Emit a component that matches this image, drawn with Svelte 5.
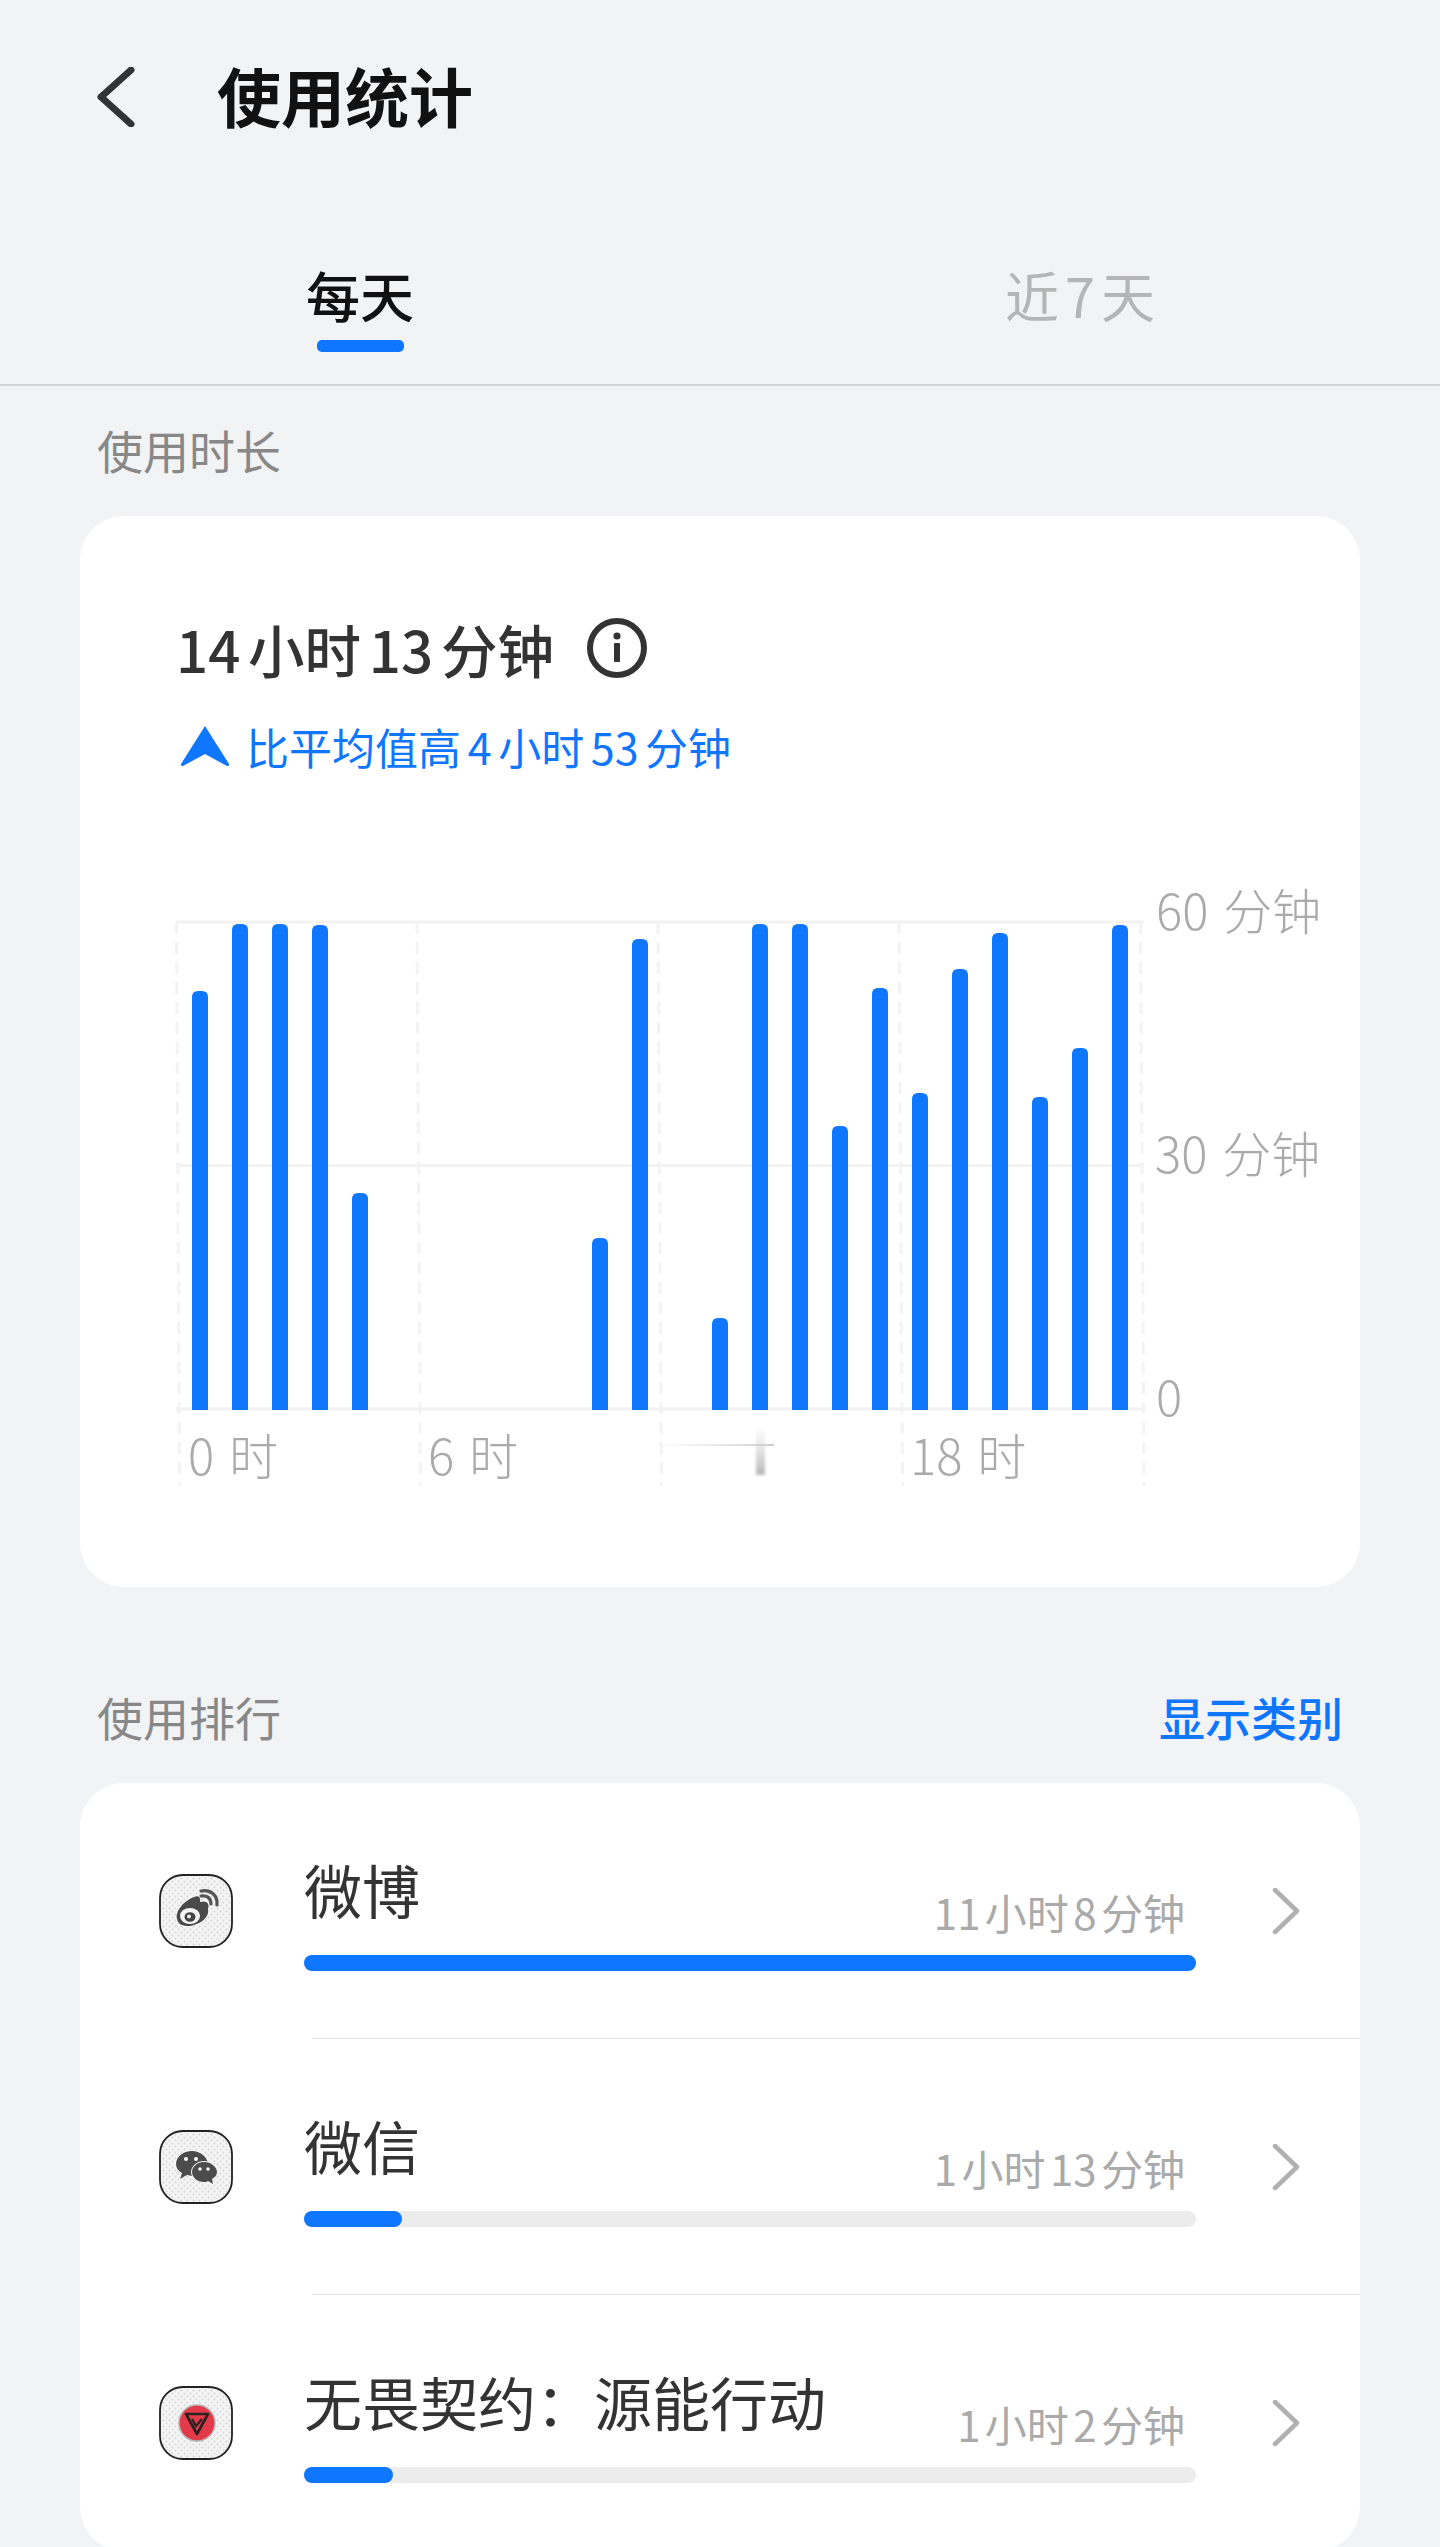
<script>
  // bar tops in page px, null = no usage that hour
  const tops = [991, 924, 924, 925, 1193, null, null, null, null, null, 1238, 939, null, 1318, 924, 924, 1126, 988, 1093, 969, 933, 1097, 1048, 925];
  const baseY = 1410;
  const barW = 16;

  const bars = tops
    .map((top, i) => ({ top, x: 192 + i * 40 }))
    .filter((b) => b.top !== null);

  function barPath(b) {
    const r = 6;
    return `M${b.x} ${baseY}V${b.top + r}Q${b.x} ${b.top} ${b.x + r} ${b.top}H${b.x + barW - r}Q${b.x + barW} ${b.top} ${b.x + barW} ${b.top + r}V${baseY}Z`;
  }

  const gridY = [922, 1165.5, 1409];
  const dashed = [
    [176.5, 179.5],
    [417, 420.5],
    [658, 661.5],
    [899, 902.5],
    [1140.5, 1144]
  ];

  const apps = [
    { name: '微博', time: '11 小时 8 分钟', pct: 100, icon: 'weibo' },
    { name: '微信', time: '1 小时 13 分钟', pct: 11, icon: 'wechat' },
    { name: '无畏契约：源能行动', time: '1 小时 2 分钟', pct: 10, icon: 'valorant' }
  ];
</script>

<div class="page">
  <header class="topbar">
    <svg class="back" width="40" height="60" viewBox="0 0 40 60">
      <path d="M35 3 L5 30 L35 57" fill="none" stroke="#333" stroke-width="7" stroke-linecap="round" stroke-linejoin="round" />
    </svg>
    <h1>使用统计</h1>
  </header>

  <nav class="tabs">
    <div class="tab active">每天<span class="indicator"></span></div>
    <div class="tab">近 7 天</div>
  </nav>

  <div class="section-label"><span>使用时长</span></div>

  <section class="card usage">
    <div class="summary">
      <div class="total">
        <span>14 小时 13 分钟</span>
        <svg width="60" height="60" viewBox="0 0 60 60">
          <circle cx="30" cy="30" r="27" fill="none" stroke="#333" stroke-width="6" />
          <circle cx="30" cy="18" r="3.6" fill="#333" />
          <rect x="27" y="25" width="6" height="19" rx="1" fill="#333" />
        </svg>
      </div>
      <div class="compare">
        <svg width="50" height="42" viewBox="0 0 50 42">
          <path d="M25 1 L49 39 Q49.500 41.500 47 41 L25 29 L3 41 Q0.500 41.500 1 39 Z" fill="#0f76ff" />
        </svg>
        <span>比平均值高 4 小时 53 分钟</span>
      </div>
    </div>

    <svg class="chart" width="1280" height="620" viewBox="80 880 1280 620">
      <defs>
        <linearGradient id="smudgeH" x1="0" x2="1" y1="0" y2="0">
          <stop offset="0" stop-color="#bbb" stop-opacity="0" />
          <stop offset="1" stop-color="#999" stop-opacity="0.5" />
        </linearGradient>
        <linearGradient id="smudgeV" x1="0" x2="0" y1="0" y2="1">
          <stop offset="0" stop-color="#ddd" stop-opacity="0.2" />
          <stop offset="1" stop-color="#b5b5b5" />
        </linearGradient>
        <filter id="soft" x="-50%" y="-20%" width="200%" height="140%">
          <feGaussianBlur stdDeviation="1.500" />
        </filter>
      </defs>

      {#each gridY as y}
        <line x1="176" x2="1144" y1={y} y2={y} stroke="#f2f2f3" stroke-width="3" />
      {/each}
      {#each dashed as [x1, x2]}
        <line {x1} {x2} y1="922" y2="1486" stroke="#f3f3f4" stroke-width="3" stroke-dasharray="12 8" />
      {/each}

      {#each bars as b}
        <path d={barPath(b)} fill="#0f76ff" />
      {/each}

      <text class="axis" x="1156" y="930">60 分钟</text>
      <text class="axis" x="1155" y="1173">30 分钟</text>
      <text class="axis" x="1156" y="1416">0</text>

      <text class="axis" x="188" y="1475">0 时</text>
      <text class="axis" x="428" y="1475">6 时</text>
      <rect x="652" y="1444" width="122" height="2" fill="url(#smudgeH)" />
      <rect x="756" y="1431" width="9" height="44" fill="url(#smudgeV)" filter="url(#soft)" />
      <text class="axis" x="910" y="1475">18 时</text>
    </svg>
  </section>

  <div class="section-label">
    <span>使用排行</span>
    <span class="link">显示类别</span>
  </div>

  <section class="card ranking">
    {#each apps as app}
      <div class="row">
        <svg class="app-icon" width="74" height="74" viewBox="0 0 74 74">
          <defs>
            <pattern id="dots-{app.icon}" width="6" height="6" patternUnits="userSpaceOnUse">
              <rect width="6" height="6" fill="#f4f4f4" />
              <circle cx="1.500" cy="1.500" r="0.900" fill="#d4d4d4" />
              <circle cx="4.500" cy="4.500" r="0.900" fill="#d4d4d4" />
            </pattern>
          </defs>
          <rect x="1" y="1" width="72" height="72" rx="23" fill="url(#dots-{app.icon})" stroke="#222" stroke-width="1.800" />
          {#if app.icon === 'weibo'}
            <path d="M18 45c-2-7 6-18 17-22 5-2 7 1 6 5 7-2 10 2 8 7 2 9-10 17-20 17-6 0-10-2-11-7z" fill="#4a4a4a" stroke="#fff" stroke-width="1.500" paint-order="stroke" />
            <ellipse cx="31" cy="42" rx="10" ry="8" fill="#f4f4f4" />
            <ellipse cx="31" cy="43" rx="5.500" ry="4.800" fill="#444" />
            <circle cx="30" cy="42.500" r="2" fill="#eee" />
            <path d="M42 22c6-1 10 2 10 8M42 17c9-2 17 4 16 14" fill="none" stroke="#555" stroke-width="3.200" stroke-linecap="round" />
          {:else if app.icon === 'wechat'}
            <path d="M33 21c-9 0-16 6-16 13 0 4 2 7 6 9l-2 6 7-4c2 0 3 1 5 1 9 0 16-6 16-12s-7-13-16-13z" fill="#4c4c4c" stroke="#fff" stroke-width="1.500" paint-order="stroke" />
            <circle cx="27" cy="29" r="2" fill="#fff" />
            <circle cx="37" cy="29" r="2" fill="#fff" />
            <path d="M45 32c-7 0-12 5-12 10s5 10 12 10c1 0 3 0 4-1l5 3-1-5c3-2 5-4 5-7 0-5-6-10-13-10z" fill="#4c4c4c" stroke="#f4f4f4" stroke-width="2" paint-order="stroke" />
            <circle cx="41" cy="39" r="1.700" fill="#fff" />
            <circle cx="49" cy="39" r="1.700" fill="#fff" />
          {:else}
            <circle cx="38" cy="37" r="18" fill="#e23a48" stroke="#b5b5b5" stroke-width="1.500" />
            <path d="M27 28h22l-11 20z" fill="none" stroke="#2a2020" stroke-width="2.600" stroke-linejoin="round" />
            <path d="M33 33l4 7 6-7" fill="none" stroke="#2a2020" stroke-width="2.200" />
          {/if}
        </svg>
        <div class="body">
          <div class="line">
            <span class="name">{app.name}</span>
            <span class="time">{app.time}</span>
          </div>
          <div class="track"><div class="fill" style="width: {app.pct}%"></div></div>
        </div>
        <svg class="chevron" width="30" height="46" viewBox="0 0 30 46">
          <path d="M4 2 L26 23 L4 44" fill="none" stroke="#b0b0b0" stroke-width="4.500" stroke-linecap="round" stroke-linejoin="round" />
        </svg>
      </div>
    {/each}
  </section>
</div>

<style>
  :global(body) {
    margin: 0;
    background: #f2f3f5;
  }

  .page {
    height: 2547px;
    overflow: hidden;
    background: #f2f3f5;
    font-family: "Noto Sans CJK SC", "Noto Sans", sans-serif;
    color: #333;
  }

  .topbar {
    display: flex;
    align-items: center;
    height: 194px;
    padding-left: 96px;
  }

  .back {
    margin-right: 82px;
  }

  h1 {
    margin: -6px 0 0 -1px;
    font-size: 64px;
    font-weight: 700;
    color: #111;
  }

  .tabs {
    display: grid;
    grid-template-columns: 1fr 1fr;
    height: 190px;
    border-bottom: 2px solid #d2d3d5;
  }

  .tab {
    position: relative;
    padding-top: 64px;
    height: 74px;
    line-height: 74px;
    text-align: center;
    font-size: 54px;
    color: #b5b5b5;
    word-spacing: -6px;
  }

  .tab.active {
    color: #111;
    font-weight: 500;
  }

  .indicator {
    position: absolute;
    left: 317px;
    top: 146px;
    width: 87px;
    height: 12px;
    border-radius: 5px;
    background: #0f76ff;
  }

  .section-label {
    display: flex;
    justify-content: space-between;
    padding: 33px 97px 37px;
    line-height: 60px;
    font-size: 46px;
    color: #888;
  }

  .link {
    color: #0f76ff;
    font-weight: 500;
  }

  .card {
    margin: 0 80px;
    border-radius: 44px;
    background: #fff;
  }

  .usage {
    height: 1071px;
    margin-bottom: 66px;
  }

  .summary {
    padding: 92px 0 0 96px;
  }

  .total {
    display: flex;
    align-items: center;
    gap: 33px;
    height: 80px;
    font-size: 56.500px;
    font-weight: 500;
    word-spacing: -5px;
  }

  .compare {
    display: flex;
    align-items: center;
    gap: 16px;
    height: 60px;
    margin-top: 28px;
    margin-left: 4px;
    font-size: 43px;
    color: #0f76ff;
    word-spacing: -3px;
  }

  .chart {
    display: block;
    margin-top: 104px;
    overflow: visible;
  }

  .axis {
    font-size: 49px;
    font-weight: 300;
    fill: #aaa;
    word-spacing: 4px;
  }

  .row {
    position: relative;
    display: flex;
    align-items: center;
    height: 256px;
    padding-left: 79px;
  }

  .row::after {
    content: "";
    position: absolute;
    left: 232px;
    right: 0;
    bottom: 0;
    height: 1px;
    background: #e2e2e4;
  }

  .app-icon {
    flex: none;
    margin-right: 71px;
  }

  .body {
    width: 892px;
    flex: none;
  }

  .line {
    display: flex;
    justify-content: space-between;
    height: 103px;
    padding-right: 11px;
  }

  .name {
    margin-top: -3px;
    line-height: 80px;
    font-size: 58px;
  }

  .time {
    margin-top: 30px;
    line-height: 60px;
    font-size: 42px;
    color: #aaa;
    word-spacing: -5px;
  }

  .track {
    height: 16px;
    border-radius: 8px;
    background: #ececed;
  }

  .fill {
    height: 100%;
    border-radius: 8px;
    background: #0f76ff;
  }

  .chevron {
    flex: none;
    margin-left: 75px;
  }
</style>
